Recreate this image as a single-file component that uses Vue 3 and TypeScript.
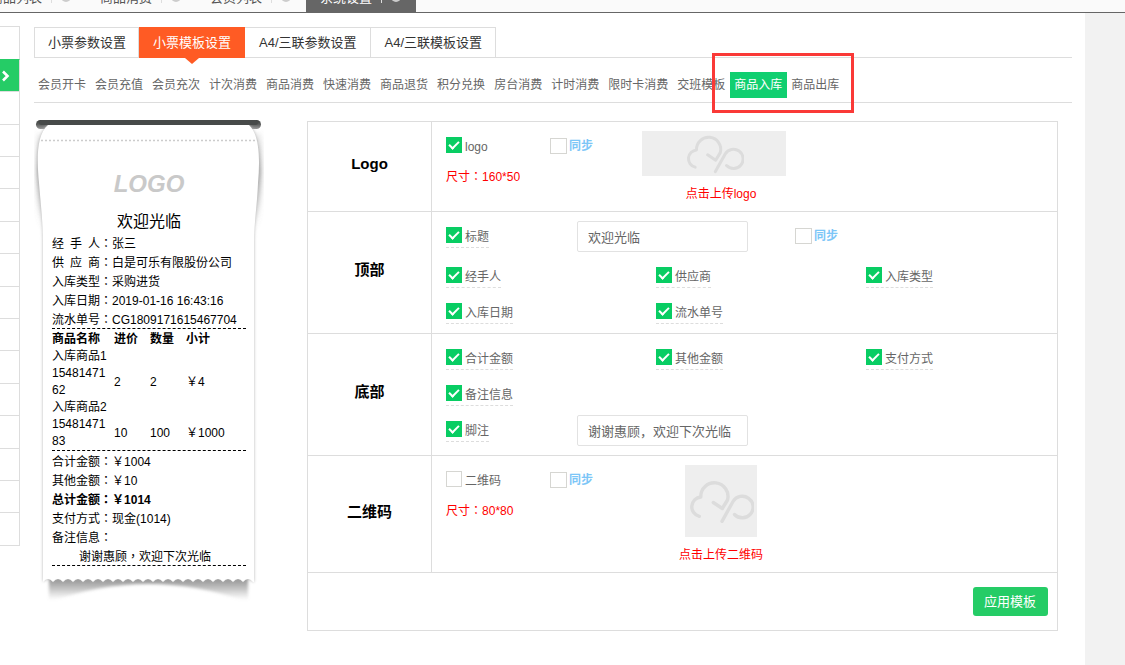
<script setup lang="ts">
import { reactive, ref } from 'vue'

interface Option {
  id: string
  label: string
  checked: boolean
}

const pageTabs = ['商品列表', '商品消费', '会员列表', '系统设置']
const activePage = ref(3)

const mainTabs = ['小票参数设置', '小票模板设置', 'A4/三联参数设置', 'A4/三联模板设置']
const activeMain = ref(1)

const subTabs = [
  '会员开卡', '会员充值', '会员充次', '计次消费', '商品消费', '快速消费', '商品退货',
  '积分兑换', '房台消费', '计时消费', '限时卡消费', '交班模板', '商品入库', '商品出库',
]
const activeSub = ref(12)

const info = [
  { label: '经 手 人', value: '张三' },
  { label: '供 应 商', value: '白是可乐有限股份公司' },
  { label: '入库类型', value: '采购进货' },
  { label: '入库日期', value: '2019-01-16 16:43:16' },
  { label: '流水单号', value: 'CG1809171615467704' },
]

const goods = [
  { name: '入库商品1', code: '1548147162', price: '2', count: '2', total: '￥4' },
  { name: '入库商品2', code: '1548147183', price: '10', count: '100', total: '￥1000' },
]

const totals = [
  { label: '合计金额', value: '￥1004', strong: false },
  { label: '其他金额', value: '￥10', strong: false },
  { label: '总计金额', value: '￥1014', strong: true },
  { label: '支付方式', value: '现金(1014)', strong: false },
  { label: '备注信息', value: '', strong: false },
]

const form = reactive({
  logo: true,
  logoSync: false,
  title: true,
  titleText: '欢迎光临',
  titleSync: false,
  footnote: true,
  footnoteText: '谢谢惠顾，欢迎下次光临',
  qr: false,
  qrSync: false,
})

const topOptions = reactive<Option[]>([
  { id: 'handler', label: '经手人', checked: true },
  { id: 'supplier', label: '供应商', checked: true },
  { id: 'kind', label: '入库类型', checked: true },
  { id: 'date', label: '入库日期', checked: true },
  { id: 'serial', label: '流水单号', checked: true },
])

const bottomOptions = reactive<Option[]>([
  { id: 'sum', label: '合计金额', checked: true },
  { id: 'other', label: '其他金额', checked: true },
  { id: 'pay', label: '支付方式', checked: true },
  { id: 'remark', label: '备注信息', checked: true },
])

const teeth = Array.from({ length: 21 }, () => 'q 5 -6 10 0').join(' ')
const paperPath =
  'M 14 12 C 2 22 3 48 5 70 C 7 94 9 110 9 130 L 9 469 ' + teeth +
  ' L 220 469 L 220 130 C 220 110 223 94 224 70 C 226 48 226 22 215 12 Z'
</script>

<template>
  <div class="page">
    <nav class="page-tabs">
      <button
        v-for="(tab, i) in pageTabs"
        :key="tab"
        type="button"
        :class="['page-tab', { active: i === activePage }]"
        @click="activePage = i"
      >
        <span>{{ tab }}</span><i class="bar"></i><i class="dot"></i>
      </button>
    </nav>

    <div class="body">
      <aside class="rail">
        <div v-for="n in 16" :key="n" :class="['rail-cell', { active: n === 2 }]">
          <svg v-if="n === 2" width="9" height="12" viewBox="0 0 9 12">
            <path d="M2 1.5 L6.5 6 L2 10.5" fill="none" stroke="#fff" stroke-width="2.6" />
          </svg>
        </div>
      </aside>

      <main class="panel">
        <nav class="main-tabs">
          <button
            v-for="(tab, i) in mainTabs"
            :key="tab"
            type="button"
            :class="['main-tab', { active: i === activeMain }]"
            @click="activeMain = i"
          >{{ tab }}</button>
        </nav>

        <nav class="sub-tabs">
          <a
            v-for="(tab, i) in subTabs"
            :key="tab"
            href="#"
            :class="['sub-tab', { active: i === activeSub }]"
            @click.prevent="activeSub = i"
          >{{ tab }}<span v-if="i === 12" class="marker"></span></a>
        </nav>

        <div class="content">
          <section class="receipt">
            <svg class="paper" width="230" height="490" viewBox="0 0 230 490" aria-hidden="true">
              <defs>
                <linearGradient id="slot" x1="0" y1="0" x2="0" y2="1">
                  <stop offset="0" stop-color="#3c3f3e" />
                  <stop offset="0.45" stop-color="#565857" />
                  <stop offset="1" stop-color="#9a9a9a" />
                </linearGradient>
                <linearGradient id="fold" x1="0" y1="0" x2="0" y2="1">
                  <stop offset="0" stop-color="#777" stop-opacity="0.1" />
                  <stop offset="0.4" stop-color="#777" stop-opacity="0.7" />
                  <stop offset="1" stop-color="#777" stop-opacity="0" />
                </linearGradient>
                <linearGradient id="under" gradientUnits="userSpaceOnUse" x1="0" y1="464" x2="0" y2="487">
                  <stop offset="0" stop-color="#777" stop-opacity="0.9" />
                  <stop offset="0.5" stop-color="#888" stop-opacity="0.5" />
                  <stop offset="1" stop-color="#999" stop-opacity="0" />
                </linearGradient>
                <filter id="soft" x="-20%" y="-20%" width="140%" height="140%">
                  <feGaussianBlur stdDeviation="2.5" />
                </filter>
                <filter id="edge" x="-10%" y="-10%" width="120%" height="120%">
                  <feGaussianBlur stdDeviation="1.4" />
                </filter>
              </defs>
              <path d="M3 20 C2 90 5 100 8 116 L222 116 C225 100 228 90 227 20 Z" fill="url(#fold)" filter="url(#soft)" />
              <path d="M15 462 L15 489 Q 114 453 214 489 L214 462 Z" fill="url(#under)" filter="url(#edge)" />
              <rect x="2" y="7" width="225" height="9" rx="4.5" fill="url(#slot)" />
              <path :d="paperPath" fill="#b4b4b4" filter="url(#edge)" />
              <rect x="5" y="7" width="219" height="5" rx="2.5" fill="#474a49" />
              <path :d="paperPath" fill="#fff" />
              <path d="M7 27.5 H224" stroke="#ccc" stroke-width="1.5" stroke-dasharray="2 2" />
            </svg>

            <div class="receipt-text">
              <div class="receipt-logo">LOGO</div>
              <div class="receipt-title">欢迎光临</div>
              <div v-for="row in info" :key="row.label" class="line">
                <span class="label">{{ row.label }}</span><span class="mark">：</span>{{ row.value }}
              </div>
              <table class="goods">
                <thead>
                  <tr><th class="name">商品名称</th><th class="num">进价</th><th class="num">数量</th><th>小计</th></tr>
                </thead>
                <tbody>
                  <template v-for="g in goods" :key="g.code">
                    <tr><td colspan="4">{{ g.name }}</td></tr>
                    <tr>
                      <td class="name">{{ g.code }}</td>
                      <td>{{ g.price }}</td>
                      <td>{{ g.count }}</td>
                      <td>{{ g.total }}</td>
                    </tr>
                  </template>
                </tbody>
              </table>
              <div v-for="row in totals" :key="row.label" :class="['line', { strong: row.strong }]">
                {{ row.label }}<span class="mark">：</span>{{ row.value }}
              </div>
              <div class="line thanks">谢谢惠顾<span class="mark">，</span>欢迎下次光临</div>
            </div>
          </section>

          <table class="settings">
            <tbody>
              <tr>
                <th scope="row">Logo</th>
                <td>
                  <div class="image-row">
                    <div>
                      <label class="check plain"><input v-model="form.logo" type="checkbox" />logo</label>
                      <p class="size">尺寸<span class="mark">：</span>160*50</p>
                    </div>
                    <label class="check sync"><input v-model="form.logoSync" type="checkbox" />同步</label>
                    <button type="button" class="upload">
                      <span class="thumb wide">
                        <svg width="59" height="41" viewBox="3 12 66 46">
                          <g fill="none" stroke="#dcdcdc" stroke-width="3.4" stroke-linecap="round" stroke-linejoin="round">
                            <path d="M14.3 50.3 A9.8 9.8 0 0 1 15.8 31 A13.6 13.6 0 1 1 42.5 34 L37.3 42.5 L28.3 36.5" />
                            <path d="M37 55.3 L48 35.5 A10.8 10.8 0 1 1 49.5 48.5" />
                          </g>
                        </svg>
                      </span>
                      <span class="caption">点击上传logo</span>
                    </button>
                  </div>
                </td>
              </tr>
              <tr>
                <th scope="row">顶部</th>
                <td>
                  <div class="text-row">
                    <span class="lead"><label class="check"><input v-model="form.title" type="checkbox" />标题</label></span>
                    <input v-model="form.titleText" class="text" type="text" aria-label="标题" />
                    <label class="check sync"><input v-model="form.titleSync" type="checkbox" />同步</label>
                  </div>
                  <div class="options">
                    <div v-for="o in topOptions" :key="o.id">
                      <label class="check"><input v-model="o.checked" type="checkbox" />{{ o.label }}</label>
                    </div>
                  </div>
                </td>
              </tr>
              <tr>
                <th scope="row">底部</th>
                <td>
                  <div class="options">
                    <div v-for="o in bottomOptions" :key="o.id">
                      <label class="check"><input v-model="o.checked" type="checkbox" />{{ o.label }}</label>
                    </div>
                  </div>
                  <div class="text-row">
                    <span class="lead"><label class="check"><input v-model="form.footnote" type="checkbox" />脚注</label></span>
                    <input v-model="form.footnoteText" class="text" type="text" aria-label="脚注" />
                  </div>
                </td>
              </tr>
              <tr>
                <th scope="row">二维码</th>
                <td>
                  <div class="image-row">
                    <div>
                      <label class="check plain"><input v-model="form.qr" type="checkbox" />二维码</label>
                      <p class="size">尺寸<span class="mark">：</span>80*80</p>
                    </div>
                    <label class="check sync"><input v-model="form.qrSync" type="checkbox" />同步</label>
                    <button type="button" class="upload">
                      <span class="thumb square">
                        <svg width="66" height="46" viewBox="3 12 66 46">
                          <g fill="none" stroke="#dcdcdc" stroke-width="3.4" stroke-linecap="round" stroke-linejoin="round">
                            <path d="M14.3 50.3 A9.8 9.8 0 0 1 15.8 31 A13.6 13.6 0 1 1 42.5 34 L37.3 42.5 L28.3 36.5" />
                            <path d="M37 55.3 L48 35.5 A10.8 10.8 0 1 1 49.5 48.5" />
                          </g>
                        </svg>
                      </span>
                      <span class="caption">点击上传二维码</span>
                    </button>
                  </div>
                </td>
              </tr>
              <tr>
                <td colspan="2" class="actions"><button type="button" class="apply">应用模板</button></td>
              </tr>
            </tbody>
          </table>
        </div>
      </main>
    </div>
  </div>
</template>

<style>
body {
  margin: 0;
  background: #f2f2f2;
}
</style>

<style scoped>
.page {
  min-height: 100vh;
  display: flex;
  flex-direction: column;
  font: 12px/18px "Liberation Sans", "Noto Sans CJK SC", sans-serif;
  color: #666;
}
.page * {
  box-sizing: border-box;
}
button {
  font: inherit;
  border: 0;
  padding: 0;
  background: none;
  cursor: pointer;
}
/* punctuation centred in its cell */
.mark {
  font-family: "Noto Sans CJK TC", sans-serif;
  line-height: 1;
}

/* open pages */
.page-tabs {
  display: flex;
  align-items: flex-end;
  height: 13px;
  overflow: hidden;
  background: #fafafa;
  border-bottom: 1px solid #666;
  flex: none;
}
.page-tab {
  display: flex;
  align-items: center;
  flex: none;
  width: 110px;
  height: 28px;
  padding: 0 14px;
  font-size: 13px;
  color: #555;
}
.page-tab:first-child {
  margin-left: -24px;
}
.page-tab.active {
  background: #666;
  color: #fff;
}
.bar {
  width: 1px;
  height: 10px;
  margin: 0 9px;
  background: #ddd;
}
.dot {
  width: 10px;
  height: 10px;
  margin-bottom: 2px;
  border-radius: 50%;
  background: #ccc;
  flex: none;
}

.body {
  display: flex;
  flex: 1;
  padding-right: 40px;
}

/* collapsed side menu */
.rail {
  flex: none;
  display: flex;
  flex-direction: column;
  width: 20px;
  padding-top: 13px;
  background: #fff;
}
.rail-cell {
  height: 32px;
  border-right: 1px solid #ddd;
  border-top: 1px solid #ddd;
  display: flex;
  align-items: center;
}
.rail-cell:nth-child(5n + 1),
.rail-cell:nth-child(5n + 3) {
  height: 33px;
}
.rail-cell:last-child {
  height: 34px;
  border-bottom: 1px solid #ddd;
}
.rail-cell.active {
  padding-left: 1px;
  background: #25cc66;
  border-top-color: #25cc66;
}

.panel {
  flex: 1;
  min-width: 0;
  padding: 14px 13px 0 14px;
  background: #fff;
}

.main-tabs {
  display: flex;
  height: 31px;
  border-bottom: 1px solid #ddd;
}
.main-tab {
  position: relative;
  height: 30px;
  padding: 0 13px 0 14px;
  font-size: 13px;
  color: #333;
  border-top: 1px solid #ddd;
  border-right: 1px solid #ddd;
}
.main-tab:first-child {
  padding: 0 12px 0 13px;
  border-left: 1px solid #ddd;
}
.main-tab.active {
  height: 31px;
  color: #fff;
  background: #ff5b24;
  border-color: #ff5b24;
}
.main-tab.active::after {
  content: "";
  position: absolute;
  top: 100%;
  left: 50%;
  margin-left: -7px;
  border: 7px solid transparent;
  border-top: 6px solid #ff5b24;
  border-bottom: 0;
}

.sub-tabs {
  display: flex;
  height: 45px;
  padding-top: 14px;
  border-bottom: 1px solid #ddd;
}
.sub-tab {
  position: relative;
  height: 26px;
  padding: 0 5px 0 4px;
  line-height: 27px;
  color: #666;
  text-decoration: none;
  white-space: nowrap;
}
.sub-tab.active {
  background: #10cf70;
  color: #fff;
}
.marker {
  position: absolute;
  left: -18px;
  top: -19px;
  width: 142px;
  height: 60px;
  border: 3px solid #fa3937;
}

.content {
  display: flex;
  align-items: flex-start;
  padding: 10px 14px 0 0;
}

/* receipt preview */
.receipt {
  position: relative;
  flex: none;
  width: 230px;
  height: 490px;
  margin-right: 43px;
  color: #000;
}
.paper {
  position: absolute;
  inset: 0;
}
.receipt-text {
  position: relative;
  padding: 58px 18px 0;
}
.receipt-logo {
  font: italic bold 24px/26px "Liberation Sans", sans-serif;
  color: #c9c9c9;
  text-align: center;
}
.receipt-title {
  margin: 14px 0 0;
  font-size: 16px;
  line-height: 22px;
  text-align: center;
}
.line {
  height: 19px;
  padding-top: 3px;
  line-height: 16px;
  white-space: nowrap;
}
.line.strong {
  font-weight: bold;
}
.label {
  display: inline-block;
  width: 48px;
  text-align-last: justify;
}
.thanks {
  height: 20px;
  padding-right: 8px;
  text-align: center;
  border-bottom: 1px dashed #000;
}
.goods {
  width: 100%;
  table-layout: fixed;
  border-collapse: separate;
  border-spacing: 0;
  border: dashed #000;
  border-width: 1px 0;
  padding-top: 2px;
  line-height: 17px;
}
.goods th,
.goods td {
  padding: 0;
  text-align: left;
}
.goods .name {
  width: 62px;
  padding-right: 4px;
  word-break: break-all;
}
.goods .num {
  width: 36px;
}

/* template settings */
.settings {
  flex: 1;
  min-width: 0;
  margin-top: 8px;
  display: table;
  width: 100%;
  table-layout: fixed;
  border-collapse: collapse;
}
.settings th,
.settings td {
  border: 1px solid #ddd;
  padding: 0;
}
.settings th {
  width: 124px;
  padding-bottom: 5px;
  font-size: 15px;
  color: #000;
}
.settings td {
  padding-left: 14px;
  vertical-align: top;
}
.check {
  display: inline-flex;
  height: 21px;
  gap: 3px;
  line-height: 20px;
  border-bottom: 1px dashed #ddd;
  vertical-align: top;
}
.check.plain,
.check.sync {
  border-bottom: 0;
}
.check.sync {
  gap: 2px;
  color: #7cc6f7;
  font-weight: bold;
  line-height: 16px;
}
.check input {
  appearance: none;
  position: relative;
  flex: none;
  width: 16px;
  height: 16px;
  margin: 0;
  border: 1px solid #d6d6d2;
  background: #fff;
}
.check.sync input {
  width: 17px;
}
.check input:checked {
  border-color: #08cd63;
  background: #08cd63;
}
.check input:checked::before {
  content: "";
  position: absolute;
  box-sizing: border-box;
  left: 2px;
  top: 3px;
  width: 10px;
  height: 6px;
  border: solid #fff;
  border-width: 0 0 2px 2px;
  transform: rotate(-45deg);
}

.image-row {
  display: grid;
  grid-template-columns: 104px 92px 158px;
  align-items: start;
  padding: 9px 0 5px;
}
.image-row .check.plain {
  margin-top: 6px;
}
.image-row .check.sync {
  margin-top: 7px;
}
.size {
  margin: 10px 0 0;
  color: #f00;
}
.upload {
  display: flex;
  flex-direction: column;
  align-items: center;
  color: #f00;
}
.thumb {
  display: flex;
  align-items: center;
  justify-content: center;
  background: #eee;
}
.thumb.wide {
  align-self: flex-start;
  width: 144px;
  height: 45px;
}
.thumb.square {
  width: 72px;
  height: 72px;
}
.caption {
  margin-top: 6px;
  line-height: 24px;
}

.text-row {
  display: flex;
  align-items: flex-start;
  padding-top: 9px;
}
.text-row:last-child {
  padding-bottom: 9px;
}
.lead {
  width: 131px;
  padding-top: 6px;
}
.text {
  width: 171px;
  height: 31px;
  padding: 0 10px;
  font: inherit;
  font-size: 13px;
  color: #666;
  border: 1px solid #e2e2e2;
  border-radius: 2px;
  background: #fff;
}
.text-row .check.sync {
  margin: 7px 0 0 47px;
}
.options {
  display: grid;
  grid-template-columns: 1fr 1fr 191px;
  grid-auto-rows: 36px;
}
.options > div {
  padding-top: 15px;
}
.text-row + .options {
  padding-bottom: 9px;
}

.settings .actions {
  padding: 14px 9px 14px 0;
  text-align: right;
}
.apply {
  display: inline-block;
  height: 29px;
  padding: 0 12px 0 11px;
  font-size: 13px;
  color: #fff;
  background: #25cc66;
  border-radius: 3px;
  vertical-align: top;
}
</style>
